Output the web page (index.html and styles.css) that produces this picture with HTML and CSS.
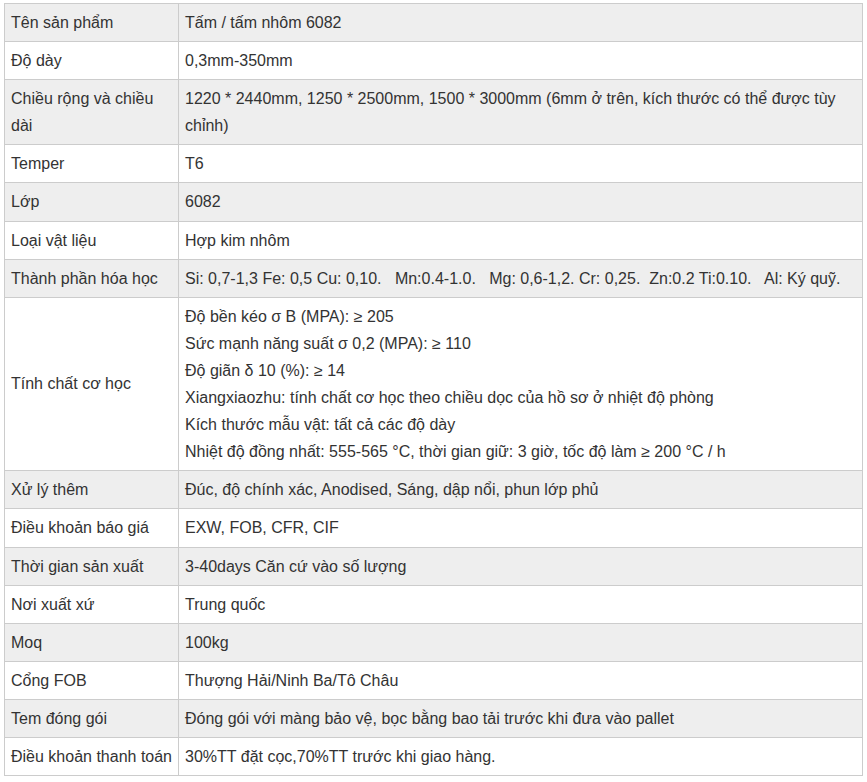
FILE: index.html
```html
<!DOCTYPE html>
<html lang="vi">
<head>
<meta charset="utf-8">
<title>Tấm nhôm 6082</title>
<link rel="stylesheet" href="styles.css">
</head>
<body>
<div class="wrap">
<table class="spec">
<colgroup><col class="c1"><col class="c2"></colgroup>
<tbody>
<tr><td>Tên sản phẩm</td><td>Tấm / tấm nhôm 6082</td></tr>
<tr><td>Độ dày</td><td>0,3mm-350mm</td></tr>
<tr><td>Chiều rộng và chiều dài</td><td>1220 * 2440mm, 1250 * 2500mm, 1500 * 3000mm (6mm ở trên, kích thước có thể được tùy chỉnh)</td></tr>
<tr><td>Temper</td><td>T6</td></tr>
<tr><td>Lớp</td><td>6082</td></tr>
<tr><td>Loại vật liệu</td><td>Hợp kim nhôm</td></tr>
<tr><td>Thành phần hóa học</td><td>Si: 0,7-1,3 Fe: 0,5 Cu: 0,10. &nbsp; Mn:0.4-1.0. &nbsp; Mg: 0,6-1,2. Cr: 0,25. &nbsp;Zn:0.2 Ti:0.10. &nbsp; Al: Ký quỹ.</td></tr>
<tr><td>Tính chất cơ học</td><td>Độ bền kéo σ B (MPA): ≥ 205<br>Sức mạnh năng suất σ 0,2 (MPA): ≥ 110<br>Độ giãn δ 10 (%): ≥ 14<br>Xiangxiaozhu: tính chất cơ học theo chiều dọc của hồ sơ ở nhiệt độ phòng<br>Kích thước mẫu vật: tất cả các độ dày<br>Nhiệt độ đồng nhất: 555-565 °C, thời gian giữ: 3 giờ, tốc độ làm ≥ 200 °C / h</td></tr>
<tr><td>Xử lý thêm</td><td>Đúc, độ chính xác, Anodised, Sáng, dập nổi, phun lớp phủ</td></tr>
<tr><td>Điều khoản báo giá</td><td>EXW, FOB, CFR, CIF</td></tr>
<tr><td>Thời gian sản xuất</td><td>3-40days Căn cứ vào số lượng</td></tr>
<tr><td>Nơi xuất xứ</td><td>Trung quốc</td></tr>
<tr><td>Moq</td><td>100kg</td></tr>
<tr><td>Cổng FOB</td><td>Thượng Hải/Ninh Ba/Tô Châu</td></tr>
<tr><td>Tem đóng gói</td><td>Đóng gói với màng bảo vệ, bọc bằng bao tải trước khi đưa vào pallet</td></tr>
<tr><td>Điều khoản thanh toán</td><td>30%TT đặt cọc,70%TT trước khi giao hàng.</td></tr>
</tbody>
</table>
</div>
</body>
</html>
```
FILE: styles.css
```css
html, body {
  margin: 0;
  padding: 0;
  background: #ffffff;
}
.wrap {
  padding: 3px 0 0 4px;
}
.spec {
  border-collapse: collapse;
  table-layout: fixed;
  width: 859px;
  font-family: "Liberation Sans", Arial, sans-serif;
  font-size: 16px;
  line-height: 27.1px;
  color: #333333;
}
.spec .c1 { width: 174px; }
.spec td {
  border: 1px solid #cccccc;
  padding: 5px 6px;
  vertical-align: middle;
  text-align: left;
}
.spec tr:nth-child(odd) td {
  background: #eeeeee;
}
```
